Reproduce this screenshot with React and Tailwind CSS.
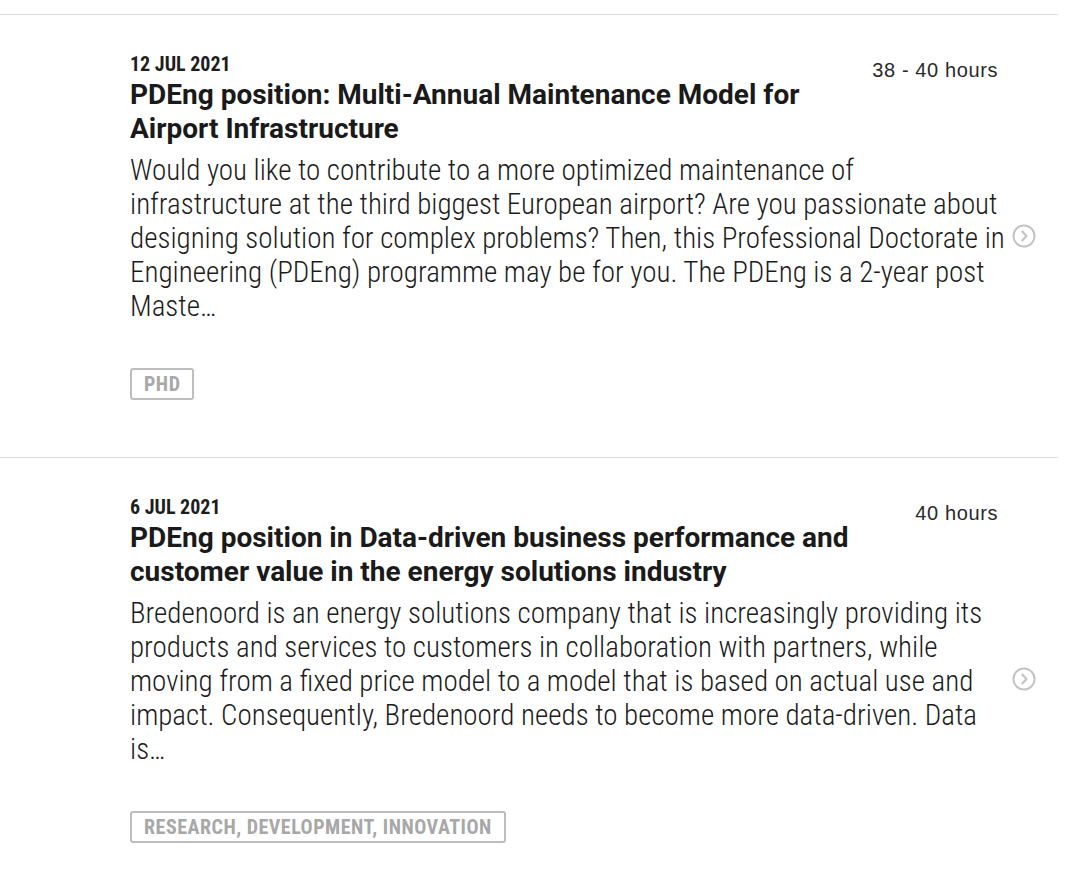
import React from "react";

const cond = "font-['Roboto',sans-serif] font-stretch-condensed";

function Chevron() {
  return (
    <svg width="24" height="24" viewBox="0 0 24 24" fill="none">
      <circle cx="12" cy="12" r="10.5" stroke="#c4c4c4" strokeWidth="2" />
      <path d="M10.3 7.6 L14.5 12 L10.3 16.4" stroke="#c4c4c4" strokeWidth="2.2" strokeLinecap="round" strokeLinejoin="round" />
    </svg>
  );
}

const items = [
  {
    date: "12 JUL 2021",
    hours: "38 - 40 hours",
    title: ["PDEng position: Multi-Annual Maintenance Model for", "Airport Infrastructure"],
    body: [
      "Would you like to contribute to a more optimized maintenance of",
      "infrastructure at the third biggest European airport? Are you passionate about",
      "designing solution for complex problems? Then, this Professional Doctorate in",
      "Engineering (PDEng) programme may be for you. The PDEng is a 2-year post",
      "Maste…",
    ],
    tag: "PHD",
  },
  {
    date: "6 JUL 2021",
    hours: "40 hours",
    title: ["PDEng position in Data-driven business performance and", "customer value in the energy solutions industry"],
    body: [
      "Bredenoord is an energy solutions company that is increasingly providing its",
      "products and services to customers in collaboration with partners, while",
      "moving from a fixed price model to a model that is based on actual use and",
      "impact. Consequently, Bredenoord needs to become more data-driven. Data",
      "is…",
    ],
    tag: "RESEARCH, DEVELOPMENT, INNOVATION",
  },
];

function Item({ it }) {
  return (
    <div className="flex items-center border-t border-[#dedede] h-[443px]">
      <div className="flex-1 min-w-0 self-start pl-[130px] pt-[37px]">
        <div className="flex justify-between items-start">
          <div>
            <div className={`${cond} text-[20px] leading-[24px] font-bold text-[#1e1e1e]`}>{it.date}</div>
            <div className="mt-[2px] font-['Roboto',sans-serif] text-[28px] leading-[34px] font-bold text-[#1a1a1a]">
              {it.title.map((l, i) => (
                <div key={i} className="whitespace-nowrap">{l}</div>
              ))}
            </div>
          </div>
          <div className="mt-[6px] font-['Liberation_Sans',sans-serif] text-[20px] leading-[24px] tracking-[0.6px] text-[#2a2a2a] whitespace-nowrap">
            {it.hours}
          </div>
        </div>
        <div className={`${cond} mt-[7px] text-[29px] leading-[34px] font-light text-[#1c1c1c]`}>
          {it.body.map((l, i) => (
            <div key={i} className="whitespace-nowrap">{l}</div>
          ))}
        </div>
        <div className="mt-[45px] flex">
          <span className={`${cond} border-2 border-[#bdbdbd] rounded-[3px] px-[12px] h-[32px] flex items-center text-[20px] tracking-[0.5px] font-bold text-[#a8a8a8]`}>
            {it.tag}
          </span>
        </div>
      </div>
      <div className="w-[60px] flex-none pl-[14px] flex items-center">
        <Chevron />
      </div>
    </div>
  );
}

export default function App() {
  return (
    <div className="bg-white w-[1080px] h-[873px] overflow-hidden pt-[14px]">
      <div className="w-[1058px]">
        {items.map((it, i) => (
          <Item key={i} it={it} />
        ))}
      </div>
    </div>
  );
}
